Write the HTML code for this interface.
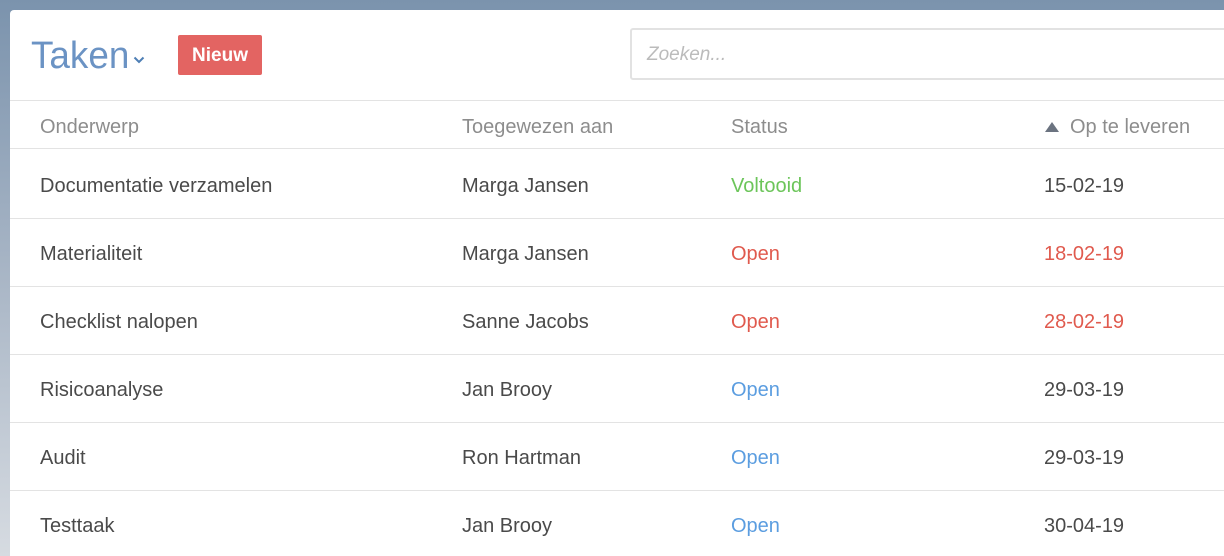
<!DOCTYPE html>
<html><head><style>
html,body{margin:0;padding:0}
body{width:1224px;height:556px;overflow:hidden;background:linear-gradient(180deg,#7b93ad 0%,#a9b6c6 50%,#d6dbe1 100%);font-family:"Liberation Sans",sans-serif;position:relative}
.card{position:absolute;left:10px;top:10px;width:1214px;height:546px;background:#fff;border-top-left-radius:4px;overflow:hidden}
.title{position:absolute;left:21px;top:25px;font-size:38px;color:#6b93c4;font-weight:normal;letter-spacing:0px;transform:scaleX(0.97);transform-origin:left}
.chev{position:absolute;left:123px;top:46px}
.btn{position:absolute;left:168px;top:25px;width:84px;height:40px;background:#e36462;border-radius:2px;color:#fff;font-size:19px;font-weight:bold;line-height:41px;text-align:center}
.search{position:absolute;left:620px;top:18px;width:620px;height:52px;border:2px solid #e2e2e2;border-radius:3px;box-sizing:border-box}
.search span{position:absolute;left:15px;top:14px;font-size:19px;font-style:italic;color:#bbb}
.line{position:absolute;left:0;width:1230px;height:1px;background:#e3e3e3}
.row{position:absolute;left:0;width:1230px;font-size:20px;letter-spacing:0;color:#4a4a4a}
.row div{position:absolute;top:0}
.h{color:#8d8d8d}
.g{color:#6cc55a}.r{color:#e05a4e}.b{color:#5b9de0}
</style></head><body>
<div class="card">
<div class="title">Taken</div>
<svg class="chev" width="12" height="8" viewBox="0 0 12 8"><path d="M1.5 1.5 L6 6 L10.5 1.5" stroke="#4e7fb5" stroke-width="2" fill="none"/></svg>
<div class="btn">Nieuw</div>
<div class="search"><span>Zoeken...</span></div>
<div class="line" style="top:90px"></div>
<div class="row h" style="top:106px"><div style="left:30px">Onderwerp</div><div style="left:452px">Toegewezen aan</div><div style="left:721px">Status</div><svg style="position:absolute;left:1035px;top:6px" width="14" height="10" viewBox="0 0 14 10"><path d="M7 0 L14 10 L0 10 Z" fill="#6b7380"/></svg><div style="left:1060px">Op te leveren</div></div>
<div class="line" style="top:138px"></div>
<div class="row" style="top:165px"><div style="left:30px">Documentatie verzamelen</div><div style="left:452px">Marga Jansen</div><div style="left:721px" class="g">Voltooid</div><div style="left:1034px">15-02-19</div></div>
<div class="line" style="top:208px"></div>
<div class="row" style="top:233px"><div style="left:30px">Materialiteit</div><div style="left:452px">Marga Jansen</div><div style="left:721px" class="r">Open</div><div style="left:1034px" class="r">18-02-19</div></div>
<div class="line" style="top:276px"></div>
<div class="row" style="top:301px"><div style="left:30px">Checklist nalopen</div><div style="left:452px">Sanne Jacobs</div><div style="left:721px" class="r">Open</div><div style="left:1034px" class="r">28-02-19</div></div>
<div class="line" style="top:344px"></div>
<div class="row" style="top:369px"><div style="left:30px">Risicoanalyse</div><div style="left:452px">Jan Brooy</div><div style="left:721px" class="b">Open</div><div style="left:1034px">29-03-19</div></div>
<div class="line" style="top:412px"></div>
<div class="row" style="top:437px"><div style="left:30px">Audit</div><div style="left:452px">Ron Hartman</div><div style="left:721px" class="b">Open</div><div style="left:1034px">29-03-19</div></div>
<div class="line" style="top:480px"></div>
<div class="row" style="top:505px"><div style="left:30px">Testtaak</div><div style="left:452px">Jan Brooy</div><div style="left:721px" class="b">Open</div><div style="left:1034px">30-04-19</div></div>
</div>
</body></html>
